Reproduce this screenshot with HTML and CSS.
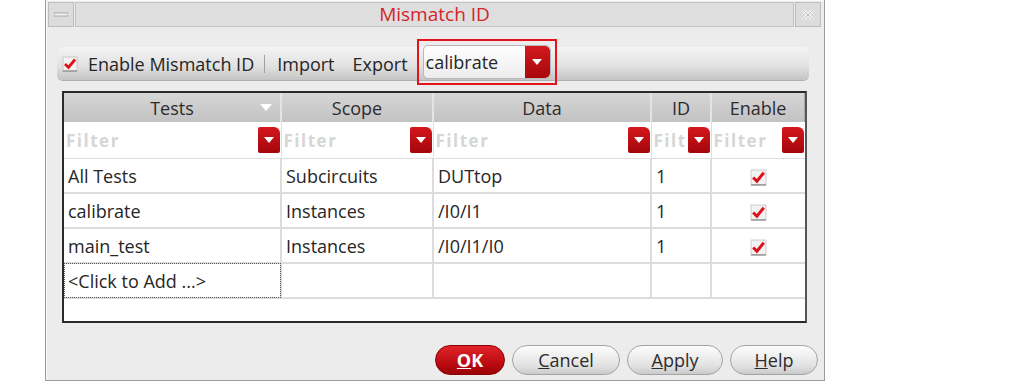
FILE: index.html
```html
<!DOCTYPE html>
<html lang="en">
<head>
    <meta charset="UTF-8">
    <title>Mismatch ID</title>
    <link rel="stylesheet" href="styles.css">
</head>
<body>
    <div class="dialog">
        <div class="titlebar">
            <div class="tb-btn">
                <svg width="14" height="6" viewBox="0 0 14 6"><rect x="0" y="1" width="14" height="3" fill="#f4f4f4" stroke="#a8a8a8"/></svg>
            </div>
            <div class="tb-title">Mismatch ID</div>
            <div class="tb-btn">
                <svg width="14" height="14" viewBox="0 0 14 14"><path d="M2 2 L12 12 M12 2 L2 12" stroke="#f6f6f6" stroke-width="3"/><path d="M2 2 L12 12 M12 2 L2 12" stroke="#bdbdbd" stroke-width="1"/></svg>
            </div>
        </div>

        <div class="toolbar">
            <span class="chk">
                <svg width="16" height="16" viewBox="0 0 16 16"><rect x="1" y="1" width="14" height="14" fill="#f2f2f2" stroke="#c8c8c8"/><line x1="1" y1="15" x2="15" y2="15" stroke="#777"/><path d="M3 8 L6.5 11.5 L13 3.5" fill="none" stroke="#e0101a" stroke-width="2.8"/></svg>
                Enable Mismatch ID
            </span>
            <span class="sep"></span>
            <span class="tool">Import</span>
            <span class="tool">Export</span>
            <div class="highlight">
                <div class="combo">
                    <span class="combo-text">calibrate</span>
                    <span class="combo-btn"><svg width="10" height="6" viewBox="0 0 10 6"><path d="M0 0 H10 L5 6 Z" fill="#fff"/></svg></span>
                </div>
            </div>
        </div>

        <div class="grid">
            <table>
                <colgroup>
                    <col style="width:217px">
                    <col style="width:152px">
                    <col style="width:218px">
                    <col style="width:60px">
                    <col>
                </colgroup>
                <thead>
                    <tr class="head">
                        <th>Tests<svg class="sort" width="12" height="7" viewBox="0 0 12 7"><path d="M0 0 H12 L6 7 Z" fill="#fff"/></svg></th>
                        <th>Scope</th>
                        <th>Data</th>
                        <th>ID</th>
                        <th>Enable</th>
                    </tr>
                    <tr class="filter">
                        <td><div class="f"><span>Filter</span><b class="fbtn"><svg width="10" height="6" viewBox="0 0 10 6"><path d="M0 0 H10 L5 6 Z" fill="#fff"/></svg></b></div></td>
                        <td><div class="f"><span>Filter</span><b class="fbtn"><svg width="10" height="6" viewBox="0 0 10 6"><path d="M0 0 H10 L5 6 Z" fill="#fff"/></svg></b></div></td>
                        <td><div class="f"><span>Filter</span><b class="fbtn"><svg width="10" height="6" viewBox="0 0 10 6"><path d="M0 0 H10 L5 6 Z" fill="#fff"/></svg></b></div></td>
                        <td><div class="f"><span>Filt</span><b class="fbtn"><svg width="10" height="6" viewBox="0 0 10 6"><path d="M0 0 H10 L5 6 Z" fill="#fff"/></svg></b></div></td>
                        <td><div class="f"><span>Filter</span><b class="fbtn"><svg width="10" height="6" viewBox="0 0 10 6"><path d="M0 0 H10 L5 6 Z" fill="#fff"/></svg></b></div></td>
                    </tr>
                </thead>
                <tbody>
                    <tr>
                        <td>All Tests</td>
                        <td>Subcircuits</td>
                        <td>DUTtop</td>
                        <td>1</td>
                        <td class="en"><svg width="17" height="17" viewBox="0 0 16 16"><rect x="1" y="1" width="14" height="14" fill="#f2f2f2" stroke="#cfcfcf"/><line x1="1" y1="15" x2="15" y2="15" stroke="#777"/><path d="M3 8 L6.5 11.5 L13 3.5" fill="none" stroke="#e0101a" stroke-width="2.8"/></svg></td>
                    </tr>
                    <tr>
                        <td>calibrate</td>
                        <td>Instances</td>
                        <td>/I0/I1</td>
                        <td>1</td>
                        <td class="en"><svg width="17" height="17" viewBox="0 0 16 16"><rect x="1" y="1" width="14" height="14" fill="#f2f2f2" stroke="#cfcfcf"/><line x1="1" y1="15" x2="15" y2="15" stroke="#777"/><path d="M3 8 L6.5 11.5 L13 3.5" fill="none" stroke="#e0101a" stroke-width="2.8"/></svg></td>
                    </tr>
                    <tr>
                        <td>main_test</td>
                        <td>Instances</td>
                        <td>/I0/I1/I0</td>
                        <td>1</td>
                        <td class="en"><svg width="17" height="17" viewBox="0 0 16 16"><rect x="1" y="1" width="14" height="14" fill="#f2f2f2" stroke="#cfcfcf"/><line x1="1" y1="15" x2="15" y2="15" stroke="#777"/><path d="M3 8 L6.5 11.5 L13 3.5" fill="none" stroke="#e0101a" stroke-width="2.8"/></svg></td>
                    </tr>
                    <tr>
                        <td class="add">&lt;Click to Add ...&gt;</td>
                        <td></td>
                        <td></td>
                        <td></td>
                        <td></td>
                    </tr>
                </tbody>
            </table>
        </div>

        <div class="buttons">
            <button class="btn ok"><u>O</u>K</button>
            <button class="btn cancel"><u>C</u>ancel</button>
            <button class="btn apply"><u>A</u>pply</button>
            <button class="btn help"><u>H</u>elp</button>
        </div>
    </div>
</body>
</html>
```

FILE: styles.css
```css
body {
    margin: 0;
    background: #fff;
    font-family: 'Open Sans', 'DejaVu Sans', sans-serif;
    font-size: 18px;
    color: #262626;
}
.dialog {
    box-sizing: border-box;
    margin-left: 45px;
    width: 780px;
    height: 381px;
    border: 1px solid #9c9c9c;
    border-top: none;
    background: #ececec;
    box-shadow: inset 1px 1px 0 #fafafa;
}
.titlebar {
    display: flex;
    height: 27px;
    padding: 2px 3px 0 2px;
    gap: 1px;
}
.tb-btn {
    width: 24px;
    height: 23px;
    border: 1px solid #bdbdbd;
    background: #dcdcdc;
    display: flex;
    align-items: center;
    justify-content: center;
}
.tb-title {
    flex: 1;
    height: 23px;
    border: 1px solid #c4c4c4;
    background: #dedede;
    color: #d3252a;
    font-size: 19px;
    line-height: 23px;
    text-align: center;
}
.toolbar {
    display: flex;
    align-items: center;
    height: 33px;
    margin: 18px 15px 0 11px;
    padding-left: 5px;
    border-radius: 6px;
    background: linear-gradient(to bottom, #f4f4f4, #e0e0e0 60%, #c4c4c4);
    box-shadow: 0 1px 0 #b0b0b0;
}
.chk {
    display: flex;
    align-items: center;
    gap: 10px;
}
.sep {
    width: 1px;
    height: 18px;
    background: #a0a0a0;
    margin: 0 12px 0 10px;
}
.tool {
    margin-right: 18px;
}
.highlight {
    margin: -9px 0 -5px -9px;
    padding: 4px;
    border: 2px solid #e4141b;
}
.combo {
    display: flex;
    align-items: stretch;
    width: 128px;
    height: 34px;
    border: 1px solid #b8b8b8;
    border-radius: 5px;
    background: linear-gradient(to bottom, #ffffff, #ececec);
    box-sizing: border-box;
}
.combo-text {
    flex: 1;
    padding-left: 2px;
    line-height: 32px;
}
.combo-btn {
    width: 25px;
    display: flex;
    align-items: center;
    justify-content: center;
    border-radius: 0 5px 5px 0;
    background: linear-gradient(to bottom, #d21a20, #a8070c);
}
.grid {
    box-sizing: border-box;
    height: 232px;
    margin: 11px 17px 0 16px;
    border: 2px solid #2a2a2a;
    border-right-color: #555;
    background: #fff;
}
table {
    width: 100%;
    border-collapse: collapse;
    table-layout: fixed;
}
.head th {
    position: relative;
    height: 29px;
    padding: 0;
    font-weight: normal;
    background: linear-gradient(to bottom, #d6d6d6, #c2c2c2);
    border-left: 2px solid #e4e4e4;
    border-right: 1px solid #a8a8a8;
    color: #2c2c2c;
}
.head th:first-child {
    border-left: none;
}
.sort {
    position: absolute;
    right: 8px;
    top: 11px;
}
.filter td {
    height: 36px;
    padding: 0;
    border-right: 1px solid #dedede;
    border-bottom: 1px solid #dedede;
}
.f {
    display: flex;
    align-items: center;
    overflow: hidden;
}
.f span {
    flex: 1;
    min-width: 0;
    overflow: hidden;
    padding-left: 2px;
    font-size: 17px;
    font-weight: bold;
    letter-spacing: 1.5px;
    color: #d6d6d6;
}
.fbtn {
    flex: none;
    display: flex;
    align-items: center;
    justify-content: center;
    width: 22px;
    height: 26px;
    margin-right: 1px;
    border-radius: 2px 6px 2px 2px;
    background: linear-gradient(to bottom, #d5171d, #a3060b);
}
tbody td {
    height: 33px;
    padding: 0 0 0 4px;
    border-right: 2px solid #dcdcdc;
    border-bottom: 2px solid #dcdcdc;
    white-space: nowrap;
}
tbody td:last-child,
.filter td:last-child {
    border-right: none;
}
tbody td.en {
    padding: 0;
    text-align: center;
}
.en svg {
    vertical-align: middle;
}
tbody td.add {
    outline: 1px dotted #555;
    outline-offset: -1px;
}
.buttons {
    display: flex;
    justify-content: flex-end;
    gap: 7px;
    margin: 22px 6px 0 0;
}
.btn {
    height: 30px;
    border: 1px solid #a4a4a4;
    border-radius: 15px;
    background: linear-gradient(to bottom, #fdfdfd, #e2e2e2 70%, #cacaca);
    font-family: 'Open Sans', 'DejaVu Sans', sans-serif;
    font-size: 18px;
    color: #2c2c2c;
    padding: 0;
}
.ok {
    width: 70px;
    border-color: #8e0005;
    background: linear-gradient(to bottom, #e0242a, #b5080e 70%, #9a0207);
    color: #fff;
    font-weight: bold;
}
.cancel {
    width: 108px;
}
.apply {
    width: 96px;
}
.help {
    width: 88px;
}
```
